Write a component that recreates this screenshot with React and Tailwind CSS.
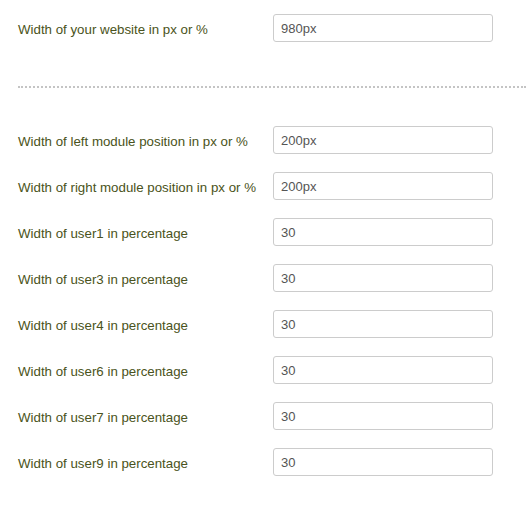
import React from 'react';

const Row = ({ label, value }) => (
  <div className="flex items-center">
    <label className="w-[255px] pt-[3px] text-[13.3px] text-[#4a5320]">{label}</label>
    <input
      type="text"
      defaultValue={value}
      className="w-[220px] h-[28px] px-[7px] text-[13px] text-[#555] bg-white border border-[#ccc] rounded-[3px] outline-none"
    />
  </div>
);

const fields = [
  ['Width of left module position in px or %', '200px'],
  ['Width of right module position in px or %', '200px'],
  ['Width of user1 in percentage', '30'],
  ['Width of user3 in percentage', '30'],
  ['Width of user4 in percentage', '30'],
  ['Width of user6 in percentage', '30'],
  ['Width of user7 in percentage', '30'],
  ['Width of user9 in percentage', '30'],
];

export default function App() {
  return (
    <div className="w-[526px] h-[505px] bg-white pl-[18px] pt-[14px] font-['Liberation_Sans',Arial,sans-serif]">
      <Row label="Width of your website in px or %" value="980px" />
      <div className="mt-[44px] mb-[38px] border-t-[2px] border-dotted border-[#c4c4c4]" />
      <div className="flex flex-col gap-[18px]">
        {fields.map(([label, value]) => (
          <Row key={label} label={label} value={value} />
        ))}
      </div>
    </div>
  );
}
